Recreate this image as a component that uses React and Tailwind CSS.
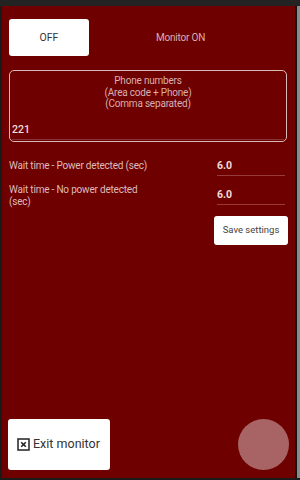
export default function App() {
  return (
    <div className="w-[300px] h-[480px] bg-[#222] flex flex-col overflow-hidden" style={{ fontFamily: 'Roboto, "Liberation Sans", sans-serif' }}>
      <div className="h-[6px] bg-[#232323]" />
      <div className="flex flex-1 min-h-0">
        <div className="w-[2px] bg-[#1a1a1a]" />
        <div className="flex-1 bg-[#6e0000] flex flex-col pl-[7px] pr-[7px]">
          {/* top row */}
          <div className="flex items-center mt-[13px]">
            <div className="w-[80px] h-[37px] bg-white rounded-[3px] flex items-center justify-center text-[10.5px] text-[#333]">
              OFF
            </div>
            <span className="ml-[67px] text-[10px] tracking-[-0.2px] text-[#d8b0b0]">Monitor ON</span>
          </div>

          {/* phone numbers */}
          <div className="mt-[14px] w-[278px] h-[72px] border-[1.5px] border-[#d8b8b8] rounded-[5px] flex flex-col px-[2px]">
            <div className="text-center text-[10px] tracking-[-0.2px] leading-[11.5px] text-[#d8b0b0] mt-[4px]">
              <div>Phone numbers</div>
              <div>(Area code + Phone)</div>
              <div>(Comma separated)</div>
            </div>
            <div className="mt-[14px] text-[10.5px] font-medium text-[#f0dede] leading-[11px]">221</div>
            <div className="mt-[4px] h-[1px] bg-[#8a3030]" />
          </div>

          {/* wait rows */}
          <div className="flex mt-[18px]">
            <div className="w-[208px] text-[10px] tracking-[-0.2px] leading-[12px] text-[#dcbcbc]">Wait time - Power detected (sec)</div>
            <div className="w-[68px] flex flex-col">
              <span className="text-[10.5px] font-bold text-[#f0dede] leading-[12px]">6.0</span>
              <div className="mt-[3px] h-[1px] bg-[#993a3a]" />
            </div>
          </div>
          <div className="flex mt-[8px]">
            <div className="w-[140px] text-[10px] tracking-[-0.2px] leading-[12px] text-[#dcbcbc]">Wait time - No power detected (sec)</div>
            <div className="ml-[68px] w-[68px] flex flex-col pt-[5px]">
              <span className="text-[10.5px] font-bold text-[#f0dede] leading-[12px]">6.0</span>
              <div className="mt-[3px] h-[1px] bg-[#993a3a]" />
            </div>
          </div>
          <div className="flex justify-end mt-[8px]">
            <div className="w-[74px] h-[29px] bg-white rounded-[3px] flex items-center justify-center text-[9.5px] text-[#444]">
              Save settings
            </div>
          </div>

          <div className="flex-1" />

          {/* bottom row */}
          <div className="flex items-center justify-between mb-[8px]">
            <div className="ml-[-1px] w-[102px] h-[51px] bg-white rounded-[3px] flex items-center pl-[9px] gap-[3px] text-[12.5px] text-[#333]">
              <svg width="13" height="13" viewBox="0 0 13 13">
                <rect x="1" y="1" width="11" height="11" fill="none" stroke="#222" strokeWidth="1.5" />
                <path d="M4.2 4.2 L8.8 8.8 M8.8 4.2 L4.2 8.8" stroke="#222" strokeWidth="1.6" />
              </svg>
              <span>Exit monitor</span>
            </div>
            <div className="w-[51px] h-[51px] rounded-full bg-[#a86464] mr-[-1px]" />
          </div>
        </div>
        <div className="w-[2px] bg-[#111]" />
        <div className="w-[3px] bg-[#8a8a8a]" />
      </div>
      <div className="h-[2px] bg-[#1a1a1a]" />
    </div>
  );
}
